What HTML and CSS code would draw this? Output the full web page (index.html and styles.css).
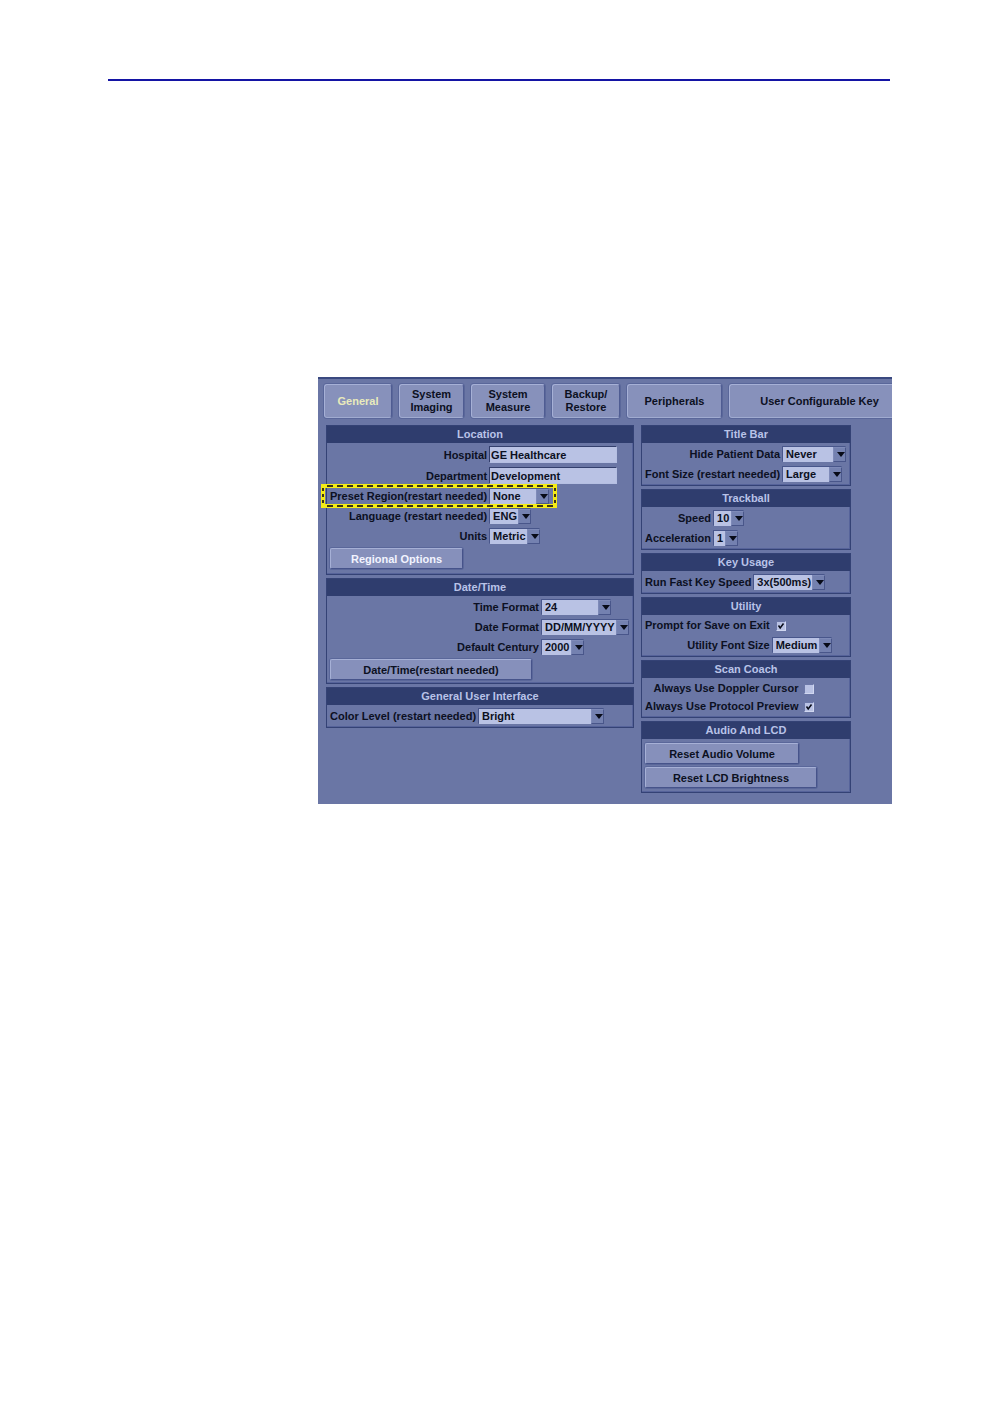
FILE: index.html
```html
<!DOCTYPE html>
<html lang="en">

<head>
  <meta charset="UTF-8">
  <meta name="viewport" content="width=device-width, initial-scale=1.0">
  <title>System - General</title>
  <link rel="stylesheet" href="styles.css">
</head>
<body>
  <div class="page">
    <hr class="page-rule">

    <main class="screen">
      <nav class="tabs">
        <button type="button" class="tab tab-general active">General</button>
        <button type="button" class="tab tab-imaging">System<br>Imaging</button>
        <button type="button" class="tab tab-measure">System<br>Measure</button>
        <button type="button" class="tab tab-backup">Backup/<br>Restore</button>
        <button type="button" class="tab tab-peripherals">Peripherals</button>
        <button type="button" class="tab tab-keys">User Configurable Key</button>
      </nav>

      <div class="columns">
        <div class="column">
          <section class="panel">
            <h2>Location</h2>
            <div class="fields fields-location">
              <label for="hospital">Hospital</label>
              <input type="text" id="hospital" value="GE Healthcare">
              <label for="department">Department</label>
              <input type="text" id="department" value="Development">
              <div class="field-row">
                <label for="region">Preset Region(restart needed)</label>
                <span class="select size-region"><select id="region"><option>None</option></select></span>
                <svg class="highlight" viewBox="0 0 236 24">
                  <rect class="band" x="2" y="2" width="232" height="20"/>
                  <path class="dash-h" d="M6 2 H232 M6 22 H232"/>
                  <path class="dash-v" d="M2 4 V22 M234 4 V22"/>
                </svg>
              </div>
              <label for="language">Language (restart needed)</label>
              <span class="select"><select id="language"><option>ENG</option></select></span>
              <label for="units">Units</label>
              <span class="select"><select id="units"><option>Metric</option></select></span>
              <button type="button" class="btn btn-regional">Regional Options</button>
            </div>
          </section>

          <section class="panel">
            <h2>Date/Time</h2>
            <div class="fields fields-date">
              <label for="time-format">Time Format</label>
              <span class="select size-time"><select id="time-format"><option>24</option></select></span>
              <label for="date-format">Date Format</label>
              <span class="select"><select id="date-format"><option>DD/MM/YYYY</option></select></span>
              <label for="century">Default Century</label>
              <span class="select"><select id="century"><option>2000</option></select></span>
              <button type="button" class="btn btn-date">Date/Time(restart needed)</button>
            </div>
          </section>

          <section class="panel">
            <h2>General User Interface</h2>
            <div class="fields">
              <label for="color-level">Color Level (restart needed)</label>
              <span class="select size-color"><select id="color-level"><option>Bright</option></select></span>
            </div>
          </section>
        </div>

        <div class="column">
          <section class="panel">
            <h2>Title Bar</h2>
            <div class="fields">
              <label for="hide-data">Hide Patient Data</label>
              <span class="select size-hide"><select id="hide-data"><option>Never</option></select></span>
              <label for="font-size">Font Size (restart needed)</label>
              <span class="select size-region"><select id="font-size"><option>Large</option></select></span>
            </div>
          </section>

          <section class="panel">
            <h2>Trackball</h2>
            <div class="fields">
              <label for="speed">Speed</label>
              <span class="select"><select id="speed"><option>10</option></select></span>
              <label for="acceleration">Acceleration</label>
              <span class="select"><select id="acceleration"><option>1</option></select></span>
            </div>
          </section>

          <section class="panel">
            <h2>Key Usage</h2>
            <div class="fields">
              <label for="key-speed">Run Fast Key Speed</label>
              <span class="select"><select id="key-speed"><option>3x(500ms)</option></select></span>
            </div>
          </section>

          <section class="panel">
            <h2>Utility</h2>
            <div class="fields">
              <label class="check-label" for="prompt-save">Prompt for Save on Exit</label>
              <span class="check"><input type="checkbox" id="prompt-save" checked><svg viewBox="0 0 10 10"><path d="M2.5 4.5 L4.2 7 L7.5 2.5"/></svg></span>
              <label for="utility-font">Utility Font Size</label>
              <span class="select"><select id="utility-font"><option>Medium</option></select></span>
            </div>
          </section>

          <section class="panel">
            <h2>Scan Coach</h2>
            <div class="fields fields-tight">
              <label class="check-label" for="doppler">Always Use Doppler Cursor</label>
              <span class="check"><input type="checkbox" id="doppler"></span>
              <label class="check-label" for="protocol">Always Use Protocol Preview</label>
              <span class="check"><input type="checkbox" id="protocol" checked><svg viewBox="0 0 10 10"><path d="M2.5 4.5 L4.2 7 L7.5 2.5"/></svg></span>
            </div>
          </section>

          <section class="panel">
            <h2>Audio And LCD</h2>
            <div class="actions">
              <button type="button" class="btn btn-audio">Reset Audio Volume</button>
              <button type="button" class="btn btn-lcd">Reset LCD Brightness</button>
            </div>
          </section>
        </div>
      </div>
    </main>
  </div>
</body>
</html>
```

FILE: styles.css
```css
/* General styles */
* {
  box-sizing: border-box;
}

body {
  margin: 0;
  background-color: #fff;
  font-family: "Liberation Sans", Arial, sans-serif;
  font-size: 11px;
  font-weight: bold;
  color: #0c1022;
}

button,
input,
select {
  font: inherit;
  color: inherit;
  margin: 0;
}

.page {
  padding: 79px 106px 0 108px;
}

.page-rule {
  height: 2px;
  margin: 0 2px 296px 0;
  border: none;
  background-color: #1414a4;
}

/* Settings screen */
.screen {
  margin-left: 210px;
  padding: 5px 0 11px 6px;
  overflow: hidden;
  border-top: 2px solid #3a4980;
  background-color: #6a76a5;
}

/* Tabs */
.tabs {
  display: flex;
  gap: 7px;
}

.tab {
  flex: none;
  height: 34px;
  padding: 0;
  line-height: 13px;
  border: 1px solid #a6b0d6;
  border-right-color: #4f5c92;
  border-bottom-color: #a0abd0;
  border-radius: 3px;
  background-color: #8791bb;
  box-shadow: 0 0 0 1px #5a679a;
}

.tab.active {
  color: #e9ebbb;
}

.tab-general {
  width: 68px;
}

.tab-imaging {
  width: 65px;
}

.tab-measure {
  width: 74px;
}

.tab-backup {
  width: 68px;
}

.tab-peripherals {
  width: 95px;
}

.tab-keys {
  width: 181px;
}

/* Panels */
.columns {
  display: grid;
  grid-template-columns: 308fr 210fr;
  align-items: start;
  gap: 7px;
  margin-top: 7px;
  padding: 0 41px 0 2px;
}

.column {
  display: flex;
  flex-direction: column;
  gap: 3px;
}

.panel {
  border: 1px solid #344275;
  box-shadow: inset -1px -1px 0 #56639a;
}

.panel h2 {
  margin: 0;
  font-size: 11px;
  line-height: 17px;
  text-align: center;
  color: #b9c3e8;
  background-color: #2f3d6e;
}

/* Form rows */
.fields {
  display: grid;
  grid-template-columns: max-content 1fr;
  align-items: center;
  justify-items: start;
  gap: 4px 2px;
  padding: 3px;
}

.fields-location {
  padding-bottom: 5px;
}

.fields-date {
  grid-template-columns: 209px 1fr;
}

.fields-tight {
  row-gap: 3px;
}

.fields label {
  justify-self: end;
  line-height: 16px;
  white-space: nowrap;
}

.fields .check-label {
  line-height: 15px;
}

.field-row {
  position: relative;
  display: grid;
  grid-column: 1 / -1;
  grid-template-columns: subgrid;
  align-items: center;
}

input[type="text"] {
  width: 128px;
  height: 17px;
  padding: 0 1px;
  border: 1px solid #b5bfe2;
  border-top-color: #333f6d;
  border-left-color: #333f6d;
  background-color: #b9c2e4;
}

/* Drop-downs */
.select {
  position: relative;
  display: flex;
}

.select select {
  appearance: none;
  width: 100%;
  height: 16px;
  padding: 0 14px 2px 3px;
  border: 1px solid #48568b;
  border-width: 1px 0 0 1px;
  border-radius: 1px;
  background-color: #b9c2e4;
}

/* arrow box */
.select::before {
  content: "";
  position: absolute;
  top: 1px;
  right: 0;
  bottom: 0;
  width: 11px;
  border: 1px solid #7e8ab8;
  border-right-color: #49568a;
  border-bottom-color: #49568a;
  background-color: #7481b0;
  pointer-events: none;
}

.select::after {
  content: "";
  position: absolute;
  top: 6px;
  right: 1px;
  border: 4px solid transparent;
  border-top: 5px solid #080b18;
  border-bottom: none;
  pointer-events: none;
}

.size-region {
  width: 60px;
}

.size-time {
  width: 70px;
}

.size-color {
  width: 126px;
}

.size-hide {
  width: 64px;
}

/* Marker around the preset region row */
.highlight {
  position: absolute;
  top: -4px;
  left: -9px;
  width: 236px;
  height: 24px;
  fill: none;
  pointer-events: none;
}

.highlight .band {
  stroke: #f4ec14;
  stroke-width: 4;
}

.highlight .dash-h {
  stroke: #3c3412;
  stroke-width: 2;
  stroke-dasharray: 6 4;
}

.highlight .dash-v {
  stroke: #3c3412;
  stroke-width: 2;
  stroke-dasharray: 3 3;
}

/* Check boxes */
.check {
  position: relative;
  display: flex;
  margin-left: 4px;
}

.check input {
  appearance: none;
  width: 10px;
  height: 10px;
  border: 1px solid #d0d7f0;
  border-top-color: #6c78a8;
  border-left-color: #6c78a8;
  background-color: #b9c2e4;
}

.check svg {
  position: absolute;
  inset: 0;
  width: 10px;
  height: 10px;
  fill: none;
  stroke: #080b18;
  stroke-width: 1.5;
  pointer-events: none;
}

/* Buttons */
.btn {
  height: 21px;
  padding: 0;
  border: 1px solid #a6b0d6;
  border-right-color: #46538a;
  border-bottom-color: #46538a;
  border-radius: 2px;
  background-color: #8690bb;
  box-shadow: 0 0 0 1px #5a679a;
}

.fields .btn {
  grid-column: 1 / -1;
}

.btn-regional {
  width: 133px;
  color: #f2f4ff;
}

.btn-date {
  width: 202px;
}

.btn-audio {
  width: 154px;
}

.btn-lcd {
  width: 172px;
}

.actions {
  display: flex;
  flex-direction: column;
  align-items: flex-start;
  gap: 3px;
  padding: 4px 3px;
}
```
